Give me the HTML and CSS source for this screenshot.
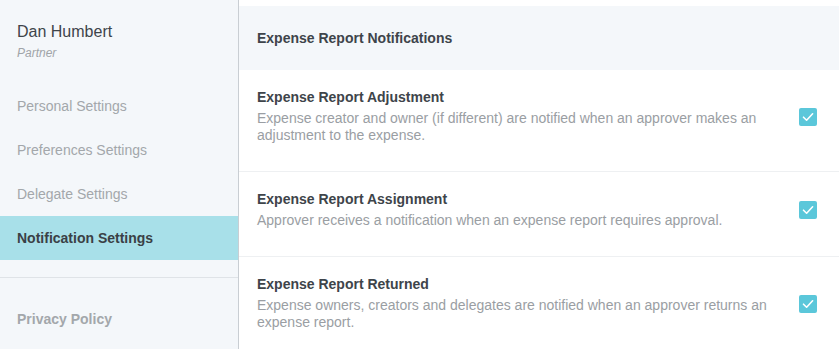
FILE: index.html
```html
<!DOCTYPE html>
<html lang="en">
<head>
    <meta charset="UTF-8">
    <meta name="viewport" content="width=device-width, initial-scale=1.0">
    <title>Notification Settings</title>
    <link rel="stylesheet" href="styles.css">
</head>
<body>
  <div class="app">
    <div class="sidebar">
      <div class="profile">
        <div class="name">Dan Humbert</div>
        <div class="role">Partner</div>
      </div>
      <ul class="menu">
        <li>Personal Settings</li>
        <li>Preferences Settings</li>
        <li>Delegate Settings</li>
        <li class="active">Notification Settings</li>
      </ul>
      <div class="privacy">Privacy Policy</div>
    </div>
    <div class="main">
      <div class="section-header">Expense Report Notifications</div>
      <div class="setting">
        <div class="setting-text">
          <div class="setting-title">Expense Report Adjustment</div>
          <div class="setting-desc">Expense creator and owner (if different) are notified when an approver makes an adjustment to the expense.</div>
        </div>
        <span class="check"><svg viewBox="0 0 18 18" width="18" height="18"><path d="M4.5 9.2 L7.6 12.2 L13.6 5.8" fill="none" stroke="#fff" stroke-width="1.6" stroke-linecap="round" stroke-linejoin="round"/></svg></span>
      </div>
      <div class="setting">
        <div class="setting-text">
          <div class="setting-title">Expense Report Assignment</div>
          <div class="setting-desc">Approver receives a notification when an expense report requires approval.</div>
        </div>
        <span class="check"><svg viewBox="0 0 18 18" width="18" height="18"><path d="M4.5 9.2 L7.6 12.2 L13.6 5.8" fill="none" stroke="#fff" stroke-width="1.6" stroke-linecap="round" stroke-linejoin="round"/></svg></span>
      </div>
      <div class="setting">
        <div class="setting-text">
          <div class="setting-title">Expense Report Returned</div>
          <div class="setting-desc">Expense owners, creators and delegates are notified when an approver returns an expense report.</div>
        </div>
        <span class="check"><svg viewBox="0 0 18 18" width="18" height="18"><path d="M4.5 9.2 L7.6 12.2 L13.6 5.8" fill="none" stroke="#fff" stroke-width="1.6" stroke-linecap="round" stroke-linejoin="round"/></svg></span>
      </div>
    </div>
  </div>
</body>
</html>
```
FILE: styles.css
```css
body {
    font-family: 'Liberation Sans', Arial, sans-serif;
    background-color: #fff;
    color: #454b52;
    margin: 0;
    padding: 0;
}
.app {
    display: flex;
    height: 349px;
    overflow: hidden;
}
.sidebar {
    width: 238px;
    flex-shrink: 0;
    background: #f4f7fa;
    border-right: 1px solid #c9ced3;
}
.profile {
    padding: 22px 17px 0;
    height: 62px;
}
.name {
    font-size: 16px;
    color: #3e444a;
    line-height: 20px;
}
.role {
    font-size: 12px;
    font-style: italic;
    color: #a0a4a8;
    margin-top: 3px;
    line-height: 16px;
}
.menu {
    list-style: none;
    margin: 0;
    padding: 0;
    border-bottom: 1px solid #dfe3e7;
    padding-bottom: 17px;
}
.menu li {
    height: 44px;
    line-height: 44px;
    padding-left: 17px;
    font-size: 14px;
    color: #a3a7ab;
}
.menu li.active {
    background: #a8e0e9;
    color: #3a4046;
    font-weight: bold;
}
.privacy {
    padding: 33px 17px 0;
    font-size: 14px;
    font-weight: bold;
    color: #a3a7ab;
}
.main {
    flex: 1;
    padding-top: 6px;
}
.section-header {
    background: #f4f7fa;
    height: 64px;
    line-height: 64px;
    padding-left: 18px;
    font-size: 14px;
    font-weight: bold;
    color: #3e444a;
}
.setting {
    display: flex;
    align-items: center;
    padding: 19px 22px 27px 18px;
    border-bottom: 1px solid #eef0f2;
}
.setting-text {
    flex: 1;
    padding-right: 4px;
}
.setting-title {
    font-size: 14px;
    font-weight: bold;
    color: #3e444a;
    line-height: 17px;
    margin-bottom: 4px;
}
.setting-desc {
    font-size: 14px;
    color: #9a9ea3;
    line-height: 17px;
}
.check {
    width: 18px;
    height: 18px;
    border-radius: 2px;
    background: #5bc7da;
    display: block;
    flex-shrink: 0;
}
.check svg {
    display: block;
}
```
